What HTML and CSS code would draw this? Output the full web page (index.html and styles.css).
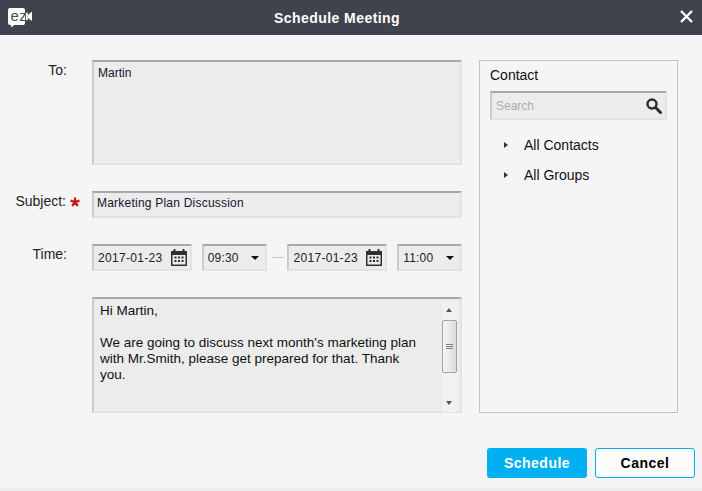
FILE: index.html
```html
<!DOCTYPE html>
<html lang="en">
<head>
<meta charset="utf-8">
<title>Schedule Meeting</title>
<link rel="stylesheet" href="styles.css">
</head>
<body>
<div class="window">
  <header class="titlebar">
    <div class="logo">
      <svg width="24" height="20" viewBox="0 0 24 20">
        <path d="M2 0h13a2 2 0 0 1 2 2v13a2 2 0 0 1-2 2H6l-2.500 2.500-.5-2.500H2a2 2 0 0 1-2-2V2a2 2 0 0 1 2-2z" fill="#fff"/>
        <rect x="17.800" y="4.700" width="2" height="7.500" fill="#fff"/>
        <path d="M20 7l4-3.500v9.500l-4-3z" fill="#fff"/>
      </svg>
      <span class="logo-text">ez</span>
    </div>
    <h1 class="title">Schedule Meeting</h1>
    <svg class="close" width="13" height="13" viewBox="0 0 13 13"><path d="M1 1l11 11M12 1L1 12" stroke="#fff" stroke-width="2.400" fill="none"/></svg>
  </header>
  <main class="body">
    <div class="form">
      <div class="row row-to">
        <label class="label">To:</label>
        <div class="field to-field">Martin</div>
      </div>
      <div class="row row-subject">
        <label class="label">Subject:<svg class="star" width="10" height="10" viewBox="0 0 10 10"><path d="M5 5V.5M5 5L9.500 3.600M5 5l2.800 4M5 5L2.200 9M5 5L.5 3.600" stroke="#d0121b" stroke-width="2.200" fill="none"/></svg></label>
        <div class="field subject-field">Marketing Plan Discussion</div>
      </div>
      <div class="row row-time">
        <label class="label">Time:</label>
        <div class="time">
          <div class="field date"><span>2017-01-23</span>
            <svg class="cal" width="16" height="17" viewBox="0 0 16 17"><path fill="#2f2f2f" fill-rule="evenodd" d="M0 2h2.500V0h2v2h7V0h2v2H16v15H0zM1.500 6v9.500h13V6z"/><path fill="#2f2f2f" d="M3.500 7.500h2v2h-2zM7 7.500h2v2H7zM10.500 7.500h2v2h-2zM3.500 11h2v2h-2zM7 11h2v2H7zM10.500 11h2v2h-2z"/></svg>
          </div>
          <div class="field select"><span>09:30</span><i class="caret"></i></div>
          <div class="dash"></div>
          <div class="field date"><span>2017-01-23</span>
            <svg class="cal" width="16" height="17" viewBox="0 0 16 17"><path fill="#2f2f2f" fill-rule="evenodd" d="M0 2h2.500V0h2v2h7V0h2v2H16v15H0zM1.500 6v9.500h13V6z"/><path fill="#2f2f2f" d="M3.500 7.500h2v2h-2zM7 7.500h2v2H7zM10.500 7.500h2v2h-2zM3.500 11h2v2h-2zM7 11h2v2H7zM10.500 11h2v2h-2z"/></svg>
          </div>
          <div class="field select"><span>11:00</span><i class="caret"></i></div>
        </div>
      </div>
      <div class="row row-msg">
        <div class="label"></div>
        <div class="field msg-field">
          <div class="msg-text">
            <p>Hi Martin,</p>
            <p>We are going to discuss next month's marketing plan with Mr.Smith, please get prepared for that. Thank you.</p>
          </div>
          <div class="scrollbar">
            <i class="arrow up"></i>
            <div class="thumb"><b></b><b></b><b></b></div>
            <i class="arrow down"></i>
          </div>
        </div>
      </div>
    </div>
    <aside class="contact">
      <div class="contact-title">Contact</div>
      <div class="field search"><span>Search</span>
        <svg width="16" height="16" viewBox="0 0 16 16"><circle cx="6" cy="6" r="4.500" fill="none" stroke="#2b2b2b" stroke-width="2.400"/><path d="M9.800 9.800l4.700 4.700" stroke="#2b2b2b" stroke-width="3" stroke-linecap="round"/></svg>
      </div>
      <ul class="tree">
        <li><i class="tri"></i>All Contacts</li>
        <li><i class="tri"></i>All Groups</li>
      </ul>
    </aside>
  </main>
  <footer class="footer">
    <button class="btn primary">Schedule</button>
    <button class="btn secondary">Cancel</button>
  </footer>
</div>
</body>
</html>
```

FILE: styles.css
```css
* { box-sizing: border-box; }
html, body { margin: 0; padding: 0; }
body {
  width: 702px; height: 491px; overflow: hidden;
  background: #f5f5f5;
  font-family: "Liberation Sans", Arial, sans-serif;
  color: #111;
}
.window { display: flex; flex-direction: column; height: 491px; border-bottom: 3px solid #ececec; }
.titlebar {
  height: 35px; background: #3f434e; flex: none;
  display: flex; align-items: center; justify-content: center;
  padding-right: 28px;
  position: relative;
}
.logo { position: absolute; left: 8px; top: 8px; width: 24px; height: 20px; }
.logo svg { display: block; }
.logo-text { position: absolute; left: 2.500px; top: 0; font-size: 15px; line-height: 16px; color: #4a4e58; letter-spacing: .3px; }
.title { margin: 0; font-size: 14px; font-weight: bold; color: #fff; letter-spacing: .45px; }
.close { position: absolute; left: 680px; top: 10px; }
.body { flex: 1; display: flex; padding: 25px 24px 0 0; }
.form { width: 462px; flex: none; }
.row { display: flex; }
.label { width: 92px; flex: none; text-align: right; padding-right: 25px; font-size: 14px; color: #222; position: relative; }
.field {
  background: #ececec;
  border: 2px solid #e2e2e2; border-top-color: #a8a8a8; border-left-color: #cacaca;
  font-size: 12px;
}
.row-to .label { padding-top: 2px; }
.to-field { width: 370px; height: 105px; padding: 4px 4px; color: #14142c; }
.row-subject { margin-top: 26px; }
.row-subject .label { padding-top: 2px; padding-right: 26px; }
.star { position: absolute; left: 70px; top: 6px; }
.subject-field { width: 370px; height: 27px; padding: 2px 3px; line-height: 16px; letter-spacing: .22px; color: #14142c; }
.row-time { margin-top: 26px; }
.row-time .label { padding-top: 2px; }
.time { display: flex; width: 370px; align-items: center; }
.date { width: 100px; height: 27px; display: flex; align-items: center; justify-content: space-between; padding: 0 3px 0 4px; margin-right: 10px; letter-spacing: .3px; }
.date span, .select span { color: #222; }
.select { width: 65px; height: 27px; display: flex; align-items: center; justify-content: space-between; padding: 0 6px 0 4px; letter-spacing: .2px; }
.caret { width: 0; height: 0; border: 4px solid transparent; border-top: 4.500px solid #111; border-bottom: 0; }
.dash { width: 13px; height: 1px; background: #c8c8c8; margin: 0 3px 0 5px; }
.row-msg { margin-top: 26px; }
.msg-field { width: 370px; height: 116px; display: flex; padding: 4px 3px 0 6px; font-size: 13.500px; line-height: 16px; color: #111; }
.msg-text { flex: 1; padding-right: 14px; }
.msg-text p { margin: 0 0 16px; }
.scrollbar { width: 15px; height: 111px; margin-top: -2px; background: #f1f1f1; position: relative; flex: none; }
.arrow { position: absolute; left: 4px; width: 0; height: 0; border: 3.500px solid transparent; }
.arrow.up { top: 7px; border-bottom: 4px solid #555; border-top: 0; }
.arrow.down { bottom: 7px; border-top: 4px solid #555; border-bottom: 0; }
.thumb {
  position: absolute; top: 19px; left: 0; width: 15px; height: 53px;
  border: 1px solid #a2a2a2; border-radius: 2px;
  background: linear-gradient(90deg, #f6f6f6, #dcdcdc);
  display: flex; flex-direction: column; justify-content: center; align-items: center; gap: 1px;
}
.thumb b { display: block; width: 7px; height: 1px; background: #808080; }
.contact { margin-left: 17px; width: 199px; height: 353px; border: 1px solid #c2c2c2; padding: 0 10px; }
.contact-title { font-size: 14px; line-height: 16px; margin-top: 6px; color: #111; }
.search { width: 177px; height: 29px; margin-top: 8px; display: flex; align-items: center; justify-content: space-between; padding: 0 3px 0 4px; }
.search span { color: #adadad; }
.tree { list-style: none; margin: 10px 0 0; padding: 0; font-size: 14px; }
.tree li { height: 30px; line-height: 30px; padding-left: 34px; position: relative; color: #111; }
.tri { position: absolute; left: 14px; top: 12px; width: 0; height: 0; border: 3.500px solid transparent; border-left: 4px solid #333; border-right: 0; }
.footer { flex: none; display: flex; justify-content: flex-end; gap: 8px; padding: 0 7px 0 0; height: 40px; }
.btn { width: 100px; height: 30px; border-radius: 3px; font: bold 14px "Liberation Sans", Arial, sans-serif; letter-spacing: .5px; padding: 0; }
.primary { background: #00b0f0; border: 0; color: #fff; }
.secondary { background: #fcfcfc; border: 1px solid #00aeef; color: #000; }
```
